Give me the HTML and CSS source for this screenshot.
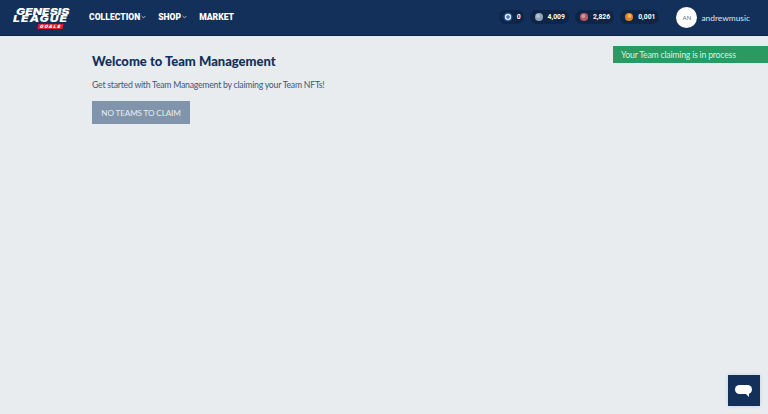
FILE: index.html
```html
<!DOCTYPE html>
<html lang="en">
<head>
<meta charset="utf-8">
<title>Team Management</title>
<link rel="stylesheet" href="styles.css">
</head>
<body>
<header class="topbar">
  <div class="logo">
    <span class="logo-line logo-genesis">GENESIS</span>
    <span class="logo-line logo-league">LEAGUE</span>
    <span class="logo-goals">GOALS</span>
  </div>
  <nav class="nav">
    <a class="nav-item">COLLECTION<svg class="chev" viewBox="0 0 6 4"><path d="M.7.8 3 3.1 5.3.8"/></svg></a>
    <a class="nav-item">SHOP<svg class="chev" viewBox="0 0 6 4"><path d="M.7.8 3 3.1 5.3.8"/></svg></a>
    <a class="nav-item">MARKET</a>
  </nav>
  <div class="balances">
    <div class="pill pill-main"><svg class="coin coin-main" viewBox="0 0 12 12"><circle cx="6" cy="6" r="5.5" fill="#1d4f96"/><circle cx="6" cy="6" r="3.8" fill="#dfe8f5"/><path d="M6 3.6v4.8M3.6 6h4.8" stroke="#1d4f96" stroke-width="1.3"/></svg><span>0</span></div>
    <div class="pill"><svg class="coin" viewBox="0 0 12 12"><circle cx="6" cy="6" r="6" fill="#8fa3b8"/><circle cx="4.6" cy="4.4" r="2.8" fill="#b9c7d4"/></svg><span>4,009</span></div>
    <div class="pill"><svg class="coin" viewBox="0 0 12 12"><circle cx="6" cy="6" r="6" fill="#b65a63"/><circle cx="5" cy="4.6" r="2.8" fill="#d69aa0"/></svg><span>2,826</span></div>
    <div class="pill"><svg class="coin" viewBox="0 0 12 12"><circle cx="6" cy="6" r="6" fill="#d9852b"/><circle cx="6.8" cy="4.4" r="2.8" fill="#f2bc62"/></svg><span>0,001</span></div>
  </div>
  <div class="user">
    <div class="avatar">AN</div>
    <span class="username">andrewmusic</span>
  </div>
</header>
<div class="toast">Your Team claiming is in process</div>
<main class="content">
  <h1 class="title">Welcome to Team Management</h1>
  <p class="intro">Get started with Team Management by claiming your Team NFTs!</p>
  <button class="claim" type="button" disabled>NO TEAMS TO CLAIM</button>
</main>
<button class="chat" type="button" aria-label="Chat">
  <svg viewBox="0 0 18 14" class="chat-icon"><rect x="0" y="0" width="17" height="9" rx="4.5" fill="#fff"/><path d="M10.5 8.5h3.5v3.5z" fill="#fff"/></svg>
</button>
</body>
</html>
```

FILE: styles.css
```css
* { box-sizing: border-box; }
html, body { height: 100%; }
body {
  margin: 0;
  height: 414px;
  overflow: hidden;
  background: #e8ecef;
  font-family: "Lato", "Noto Sans", sans-serif;
  color: #12305a;
}
.topbar {
  height: 36px;
  background: #12305a;
  border-bottom: 1px solid #0c2344;
  display: flex;
  align-items: center;
  padding-left: 13px;
  color: #fff;
}
.logo {
  width: 76px;
  display: flex;
  flex-direction: column;
  align-items: flex-start;
  font-family: "Inter", sans-serif;
  font-weight: 900;
  font-style: italic;
  color: #fff;
  margin-top: 1px;
}
.logo-line {
  font-size: 9.5px;
  line-height: 7.5px;
  white-space: nowrap;
  transform-origin: left center;
}
.logo-genesis { margin-left: 3px; transform: scaleX(1.28); }
.logo-league { letter-spacing: .8px; transform: scaleX(1.28); }
.logo-goals {
  margin: 1px 0 0 25px;
  padding: 0 2px;
  background: #d8222f;
  font-size: 4.5px;
  line-height: 5px;
  letter-spacing: 1.1px;
  transform: skewX(-10deg);
}
.nav {
  display: flex;
  gap: 12px;
  font-family: "Roboto", sans-serif;
  font-weight: 900;
  font-size: 8.6px;
  margin-bottom: 2px;
}
.nav-item {
  display: flex;
  align-items: center;
  gap: 1px;
  color: #fff;
  white-space: nowrap;
}
.chev { width: 5px; height: 4px; fill: none; stroke: #dfe6ef; stroke-width: .9; }
.balances {
  margin-left: auto;
  display: flex;
  gap: 6px;
  margin-bottom: 2px;
}
.pill {
  height: 14px;
  display: flex;
  align-items: center;
  gap: 5px;
  padding: 0 4px 0 5px;
  border-radius: 7px;
  background: #0e2547;
  color: #fff;
  font-family: "Roboto", sans-serif;
  font-weight: 700;
  font-size: 6.8px;
}
.pill-main { gap: 4px; padding: 0 3px 0 4px; }
.coin { width: 8px; height: 8px; flex: none; }
.coin-main { width: 10px; height: 10px; }
.user {
  display: flex;
  align-items: center;
  gap: 4px;
  margin-left: 17px;
  margin-right: 18px;
}
.avatar {
  width: 21px;
  height: 21px;
  border-radius: 50%;
  background: #fff;
  color: #5c6c80;
  font-size: 6px;
  display: flex;
  align-items: center;
  justify-content: center;
}
.username { font-size: 8.4px; color: #dfe6ef; }
.toast {
  position: absolute;
  top: 46px;
  right: 0;
  width: 155px;
  height: 17px;
  background: #2a9a63;
  color: #dcefe4;
  font-size: 8.7px;
  letter-spacing: -.2px;
  line-height: 17px;
  padding-left: 8px;
}
.content { padding: 17px 0 0 92px; }
.title {
  margin: 0;
  font-size: 13px;
  line-height: 16px;
  font-weight: 900;
  color: #12305a;
}
.intro {
  margin: 10px 0 0;
  font-size: 8.7px;
  letter-spacing: -.23px;
  line-height: 12px;
  color: #3f5675;
}
.claim {
  display: block;
  margin-top: 10px;
  width: 98px;
  height: 23px;
  padding: 0;
  border: 0;
  background: #8094ab;
  color: #e8ecef;
  font-family: "Lato", sans-serif;
  font-size: 8.2px;
  letter-spacing: -.15px;
}
.chat {
  position: absolute;
  right: 8px;
  bottom: 8px;
  width: 32px;
  height: 31px;
  border: 0;
  padding: 0;
  background: #12305a;
  box-shadow: 0 0 4px rgba(18, 48, 90, .15);
  display: flex;
  align-items: center;
  justify-content: center;
}
.chat-icon { width: 18px; height: 14px; margin-top: 3px; }
```
